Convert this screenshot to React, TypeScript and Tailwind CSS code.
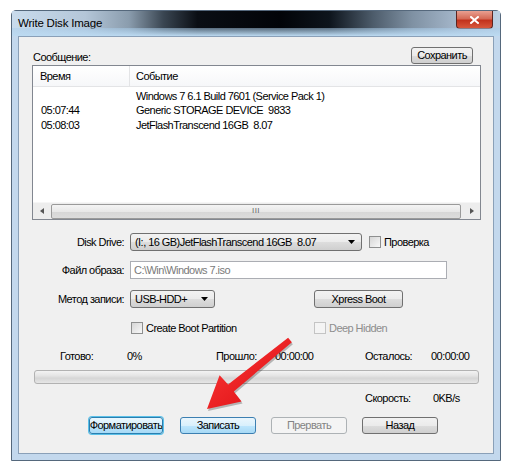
import React from "react";

function Btn({ children, w, kind = "normal" }: { children: React.ReactNode; w: string; kind?: "normal" | "hot" | "focus" | "disabled" }) {
  const base = "h-[17px] rounded-[3px] border flex items-center justify-center text-[11px] leading-none whitespace-nowrap overflow-hidden";
  const styles = {
    normal: "border-[#707070] bg-[linear-gradient(#f2f2f2_0%,#ebebeb_50%,#dddddd_51%,#cfcfcf_100%)] text-black",
    hot: "border-[#3c7fb1] bg-[linear-gradient(#eaf6fd_0%,#d9f0fc_50%,#bee6fd_51%,#a7d9f5_100%)] text-black",
    focus: "border-[#2a7fb0] shadow-[0_0_0_1px_#5bc0e8] bg-[linear-gradient(#eaf6fd_0%,#d9f0fc_50%,#bee6fd_51%,#a7d9f5_100%)] text-black",
    disabled: "border-[#adb2b5] bg-[#f4f4f4] text-[#838383]",
  };
  return <div className={`${base} ${styles[kind]} ${w}`}>{children}</div>;
}

function Combo({ text, w }: { text: string; w: string }) {
  return (
    <div className={`h-[18px] ${w} rounded-[3px] border border-[#707070] bg-[linear-gradient(#f2f2f2_0%,#ebebeb_50%,#dddddd_51%,#cfcfcf_100%)] flex items-center pl-[4px] pr-[6px]`}>
      <span className="flex-1 whitespace-pre text-[11px] leading-none text-black">{text}</span>
      <svg width="7" height="4" viewBox="0 0 7 4">
        <path d="M0 0h7L3.5 4z" fill="#000" />
      </svg>
    </div>
  );
}

function Check({ label, disabled = false }: { label: string; disabled?: boolean }) {
  return (
    <div className="flex items-center gap-[3px]">
      <div
        className={`w-[12px] h-[12px] border ${
          disabled ? "border-[#c4c4c4] bg-[#f4f4f4]" : "border-[#8e8f8f] bg-[linear-gradient(135deg,#d6d6d6,#f8f8f8)]"
        }`}
      />
      <span className={`text-[11px] leading-none ${disabled ? "text-[#8d8d8d]" : "text-black"}`}>{label}</span>
    </div>
  );
}

export default function App() {
  return (
    <div className="w-[515px] h-[475px] bg-white pt-[10px] pl-[11px] font-['Liberation_Sans',Arial,sans-serif] tracking-[-0.55px]">
      <div className="relative w-[490px] h-[451px] flex flex-col border border-[#55687c] rounded-t-[5px] bg-[#bfd4ea]">
        {/* title bar: aero glass, dark streak over a light blue lower band */}
        <div className="h-[25px] flex flex-col bg-[linear-gradient(90deg,#c9dbec,#b4c6d8_15%,#8a9cad_24%,#3a4652_31%,#0a0e14_38%,#020408_55%,#0d141c_65%,#4d5c6b_74%,#7f91a3_82%,#a8bace_92%,#bcd0e4)]">
          <div className="h-[17px] flex items-start justify-between">
            <span className="pl-[6px] pt-[7px] text-[11.5px] leading-none tracking-[-0.2px] text-black">Write Disk Image</span>
            <div className="mr-[7px] w-[37px] h-[18px] rounded-b-[4px] border border-t-0 border-[#5b2420] bg-[linear-gradient(#e9a091_0%,#d46a56_45%,#c2321d_55%,#d8573c_100%)] flex items-center justify-center">
              <svg width="9" height="8" viewBox="0 0 9 8">
                <path d="M1 1l7 6M8 1l-7 6" stroke="#fff" strokeWidth="2" strokeLinecap="square" />
              </svg>
            </div>
          </div>
          <div className="h-[8px] bg-[linear-gradient(rgba(168,204,234,0.5),#bcdaf1)]" />
        </div>

        {/* frame */}
        <div className="flex-1 px-[6px] pb-[6px] bg-[#c3d8ed]">
          <div className="h-full border border-[#8aa0b8] bg-[#f0f0f0] pl-[13px] pt-[10px]">
            <div className="w-[449px] flex flex-col">
              <div className="h-[18px] flex items-center justify-between">
                <span className="pl-[1px] pt-[2px] text-[11px] leading-none">Сообщение:</span>
                <div className="mr-[8px] mt-[-1px]">
                  <Btn w="w-[62px]">Сохранить</Btn>
                </div>
              </div>

              {/* list */}
              <div className="h-[155px] border border-[#828790] bg-white flex flex-col">
                <div className="h-[21px] flex items-center border-b border-[#e3e4e6] bg-[linear-gradient(#ffffff,#f6f7f9)] text-[11px] leading-none">
                  <span className="w-[97px] pl-[7px] border-r border-[#e3e4e6] h-full flex items-center">Время</span>
                  <span className="pl-[6px]">Событие</span>
                </div>
                <div className="flex-1 pt-[2px] text-[11px] leading-none">
                  {[
                    ["", "Windows 7 6.1 Build 7601 (Service Pack 1)"],
                    ["05:07:44", "Generic STORAGE DEVICE  9833"],
                    ["05:08:03", "JetFlashTranscend 16GB  8.07"],
                  ].map(([t, e], i) => (
                    <div key={i} className="h-[14.5px] flex items-center">
                      <span className="w-[103px] pl-[8px]">{t}</span>
                      <span className="whitespace-pre">{e}</span>
                    </div>
                  ))}
                </div>
                <div className="h-[17px] flex items-center bg-[#ededed] border-t border-[#f6f6f6]">
                  <div className="w-[17px] flex justify-center">
                    <svg width="4" height="6" viewBox="0 0 4 6">
                      <path d="M4 0v6L0 3z" fill="#555" />
                    </svg>
                  </div>
                  <div className="flex-1 h-[15px] ml-[1px] mr-[2px] rounded-[2px] border border-[#9a9a9a] bg-[linear-gradient(#f4f4f4_0%,#e8e8e8_50%,#d6d6d6_51%,#dcdcdc_100%)] flex items-center justify-center">
                    <span className="text-[8px] leading-none text-[#666] tracking-[0.5px]">III</span>
                  </div>
                  <div className="w-[17px] flex justify-center">
                    <svg width="4" height="6" viewBox="0 0 4 6">
                      <path d="M0 0v6L4 3z" fill="#555" />
                    </svg>
                  </div>
                </div>
              </div>

              {/* disk drive */}
              <div className="mt-[13px] h-[18px] flex items-center">
                <span className="w-[92px] text-right text-[11px] leading-none">Disk Drive:</span>
                <div className="ml-[6px]">
                  <Combo w="w-[232px]" text="(I:, 16 GB)JetFlashTranscend 16GB  8.07" />
                </div>
                <div className="ml-[7px]">
                  <Check label="Проверка" />
                </div>
              </div>

              {/* file */}
              <div className="mt-[10px] h-[18px] flex items-center">
                <span className="w-[92px] text-right text-[11px] leading-none">Файл образа:</span>
                <div className="ml-[6px] w-[317px] h-[18px] border border-[#abadb3] bg-white flex items-center pl-[3px] text-[11px] leading-none text-[#7a7a7a]">
                  C:\Win\Windows 7.iso
                </div>
              </div>

              {/* method */}
              <div className="mt-[11px] h-[18px] flex items-center">
                <span className="w-[92px] text-right text-[11px] leading-none">Метод записи:</span>
                <div className="ml-[6px]">
                  <Combo w="w-[85px]" text="USB-HDD+" />
                </div>
                <div className="ml-[99px]">
                  <Btn w="w-[89px] !h-[18px]">Xpress Boot</Btn>
                </div>
              </div>

              {/* checkboxes */}
              <div className="mt-[13px] h-[14px] flex items-center">
                <div className="ml-[99px] w-[183px]">
                  <Check label="Create Boot Partition" />
                </div>
                <Check label="Deep Hidden" disabled />
              </div>

              {/* progress labels */}
              <div className="mt-[14px] h-[14px] flex items-center pl-[28px] text-[11px] leading-none">
                <span className="w-[67px]">Готово:</span>
                <span className="w-[89px]">0%</span>
                <span className="w-[59px]">Прошло:</span>
                <span className="w-[90px]">00:00:00</span>
                <span className="w-[66px]">Осталось:</span>
                <span>00:00:00</span>
              </div>

              <div className="mt-[7px] ml-[2px] w-[445px] h-[14px] rounded-[3px] border border-[#b2b2b2] bg-[linear-gradient(#f3f3f3_0%,#e4e4e4_40%,#d6d6d6_60%,#e6e6e6_100%)]" />

              <div className="mt-[7px] h-[14px] flex items-center pl-[333px] text-[11px] leading-none">
                <span className="w-[68px]">Скорость:</span>
                <span>0KB/s</span>
              </div>

              {/* buttons */}
              <div className="mt-[12px] h-[17px] flex items-center pl-[57px]">
                <Btn w="w-[74px]" kind="focus">Форматировать</Btn>
                <div className="ml-[17px]">
                  <Btn w="w-[76px]" kind="hot">Записать</Btn>
                </div>
                <div className="ml-[15px]">
                  <Btn w="w-[76px]" kind="disabled">Прервать</Btn>
                </div>
                <div className="ml-[15px]">
                  <Btn w="w-[76px]">Назад</Btn>
                </div>
              </div>
            </div>
          </div>
        </div>

        {/* red arrow annotation */}
        <svg className="absolute left-[-12px] top-[-11px] pointer-events-none" width="515" height="475" viewBox="0 0 515 475">
          <defs>
            <linearGradient id="arrowFill" x1="0" y1="0" x2="1" y2="1">
              <stop offset="0" stopColor="#ff3b3b" />
              <stop offset="1" stopColor="#d80a0e" />
            </linearGradient>
          </defs>
          <polygon
            points="289.1,339.7 229.1,386.5 220.6,377.2 208,411 242.6,403.5 234.8,393.4 292.9,344.3"
            fill="#000"
            opacity="0.25"
          />
          <polygon
            points="288.1,337.7 228.1,384.5 219.6,375.2 207,409 241.6,401.5 233.8,391.4 291.9,342.3"
            fill="url(#arrowFill)"
          />
        </svg>
      </div>
    </div>
  );
}
